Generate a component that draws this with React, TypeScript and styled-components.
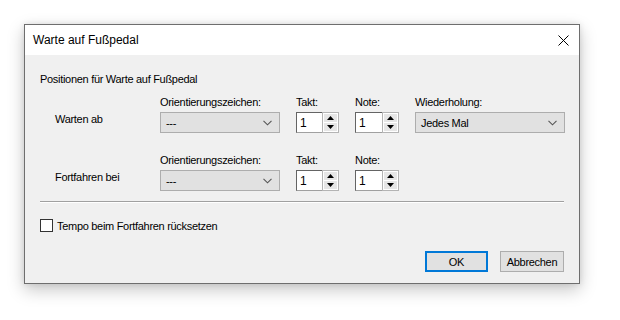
import React from 'react'
import styled, { createGlobalStyle } from 'styled-components';

const GlobalStyle = createGlobalStyle`
  html, body {
    margin: 0;
    padding: 0;
    background: #ffffff;
  }
  body {
    font-family: "Liberation Sans", Arial, sans-serif;
    color: #000000;
  }
  * {
    box-sizing: border-box;
  }
`

interface SpinProps {
  value: string;
  wide?: boolean;
}

const Chevron = () => (
  <svg width="9" height="6" viewBox="0 0 9 6">
    <path d="M0.5 0.8 L4.5 4.8 L8.5 0.8" fill="none" stroke="#555" strokeWidth="1.1" />
  </svg>
)

const Spin = ({ value, wide }: SpinProps) => (
  <SpinBox $wide={wide}>
    <SpinInput>{value}</SpinInput>
    <SpinButtons>
      <SpinButton>
        <svg width="7" height="4" viewBox="0 0 7 4"><path d="M3.5 0 L7 4 L0 4 Z" fill="#000" /></svg>
      </SpinButton>
      <SpinButton>
        <svg width="7" height="4" viewBox="0 0 7 4"><path d="M0 0 L7 0 L3.5 4 Z" fill="#000" /></svg>
      </SpinButton>
    </SpinButtons>
  </SpinBox>
)

const Combo = ({ value }: { value: string }) => (
  <ComboBox>
    <span>{value}</span>
    <Chevron />
  </ComboBox>
)

const App = () => {
  return (
    <>
      <GlobalStyle />
      <Page>
        <Window>
          <TitleBar>
            <Title>Warte auf Fußpedal</Title>
            <CloseButton>
              <svg width="11" height="11" viewBox="0 0 11 11">
                <path d="M0.5 0.5 L10.5 10.5 M10.5 0.5 L0.5 10.5" stroke="#000" strokeWidth="1" />
              </svg>
            </CloseButton>
          </TitleBar>
          <Body>
            <Heading>Positionen für Warte auf Fußpedal</Heading>
            <FormRow>
              <RowLabel>Warten ab</RowLabel>
              <Field>
                <FieldLabel>Orientierungszeichen:</FieldLabel>
                <Combo value="---" />
              </Field>
              <Field>
                <FieldLabel>Takt:</FieldLabel>
                <Spin value="1" />
              </Field>
              <Field>
                <FieldLabel>Note:</FieldLabel>
                <Spin value="1" wide />
              </Field>
              <Field>
                <FieldLabel>Wiederholung:</FieldLabel>
                <Combo value="Jedes Mal" />
              </Field>
            </FormRow>
            <FormRow $second>
              <RowLabel>Fortfahren bei</RowLabel>
              <Field>
                <FieldLabel>Orientierungszeichen:</FieldLabel>
                <Combo value="---" />
              </Field>
              <Field>
                <FieldLabel>Takt:</FieldLabel>
                <Spin value="1" />
              </Field>
              <Field>
                <FieldLabel>Note:</FieldLabel>
                <Spin value="1" wide />
              </Field>
            </FormRow>
            <Separator />
            <CheckRow>
              <CheckBox />
              <span>Tempo beim Fortfahren rücksetzen</span>
            </CheckRow>
            <ButtonRow>
              <Button $primary>OK</Button>
              <Button>Abbrechen</Button>
            </ButtonRow>
          </Body>
        </Window>
      </Page>
    </>
  )
}

const Page = styled.div`
  width: 620px;
  height: 320px;
  padding: 24px 0 0 24px;
`

const Window = styled.div`
  width: 556px;
  height: 260px;
  border: 1px solid #6e6e6e;
  background: #f0f0f0;
  display: flex;
  flex-direction: column;
  box-shadow: 0 6px 16px rgba(0, 0, 0, 0.22), 0 0 6px rgba(0, 0, 0, 0.1);
`

const TitleBar = styled.div`
  height: 30px;
  background: #ffffff;
  display: flex;
  align-items: center;
  justify-content: space-between;
  padding-left: 8px;
`

const Title = styled.span`
  font-size: 12px;
`

const CloseButton = styled.div`
  width: 30px;
  height: 30px;
  display: flex;
  align-items: center;
  justify-content: center;
  padding-right: 2px;
`

const Body = styled.div`
  flex: 1;
  padding: 17px 14px 0 15px;
  font-size: 11px;
  letter-spacing: -0.3px;
  display: flex;
  flex-direction: column;
`

const Heading = styled.div`
  line-height: 14px;
  height: 14px;
`

const FormRow = styled.div<{ $second?: boolean }>`
  display: grid;
  grid-template-columns: 89px 120px 43px 44px 150px;
  column-gap: 16px;
  align-items: end;
  margin-left: 15px;
  margin-top: ${({ $second }) => ($second ? '20px' : '9px')};
`

const RowLabel = styled.div`
  line-height: 14px;
  margin-bottom: 7px;
`

const Field = styled.div`
  display: flex;
  flex-direction: column;
  gap: 3px;
`

const FieldLabel = styled.div`
  line-height: 14px;
  white-space: nowrap;
`

const ComboBox = styled.div`
  height: 21px;
  background: #e1e1e1;
  border: 1px solid #adadad;
  display: flex;
  align-items: center;
  justify-content: space-between;
  padding: 0 7px 0 5px;
`

const SpinBox = styled.div<{ $wide?: boolean }>`
  height: 21px;
  display: flex;
  width: ${({ $wide }) => ($wide ? '44px' : '43px')};
`

const SpinInput = styled.div`
  flex: 1;
  background: #ffffff;
  border-top: 1px solid #646464;
  border-left: 1px solid #646464;
  border-bottom: 1px solid #a0a0a0;
  padding: 3px 0 0 3px;
  font-size: 12px;
`

const SpinButtons = styled.div`
  width: 17px;
  display: flex;
  flex-direction: column;
  border: 1px solid #b4b4b4;
  background: #ffffff;
  padding: 1px;
  gap: 1px;
`

const SpinButton = styled.div`
  flex: 1;
  background: #e6e6e6;
  display: flex;
  align-items: center;
  justify-content: center;
`

const Separator = styled.div`
  height: 2px;
  border-top: 1px solid #a0a0a0;
  border-bottom: 1px solid #ffffff;
  margin-top: 10px;
  margin-right: 1px;
`

const CheckRow = styled.div`
  display: flex;
  align-items: center;
  gap: 4px;
  margin-top: 16px;
  height: 13px;
`

const CheckBox = styled.div`
  width: 13px;
  height: 13px;
  border: 1px solid #333333;
  background: #ffffff;
`

const ButtonRow = styled.div`
  display: flex;
  justify-content: flex-end;
  gap: 12px;
  margin-top: 19px;
  padding-right: 1px;
`

const Button = styled.div<{ $primary?: boolean }>`
  width: ${({ $primary }) => ($primary ? '63px' : '64px')};
  height: 21px;
  display: flex;
  align-items: center;
  justify-content: center;
  background: #e1e1e1;
  border: ${({ $primary }) => ($primary ? '2px solid #0078d7' : '1px solid #adadad')};
  font-size: 11px;
`

export default App
